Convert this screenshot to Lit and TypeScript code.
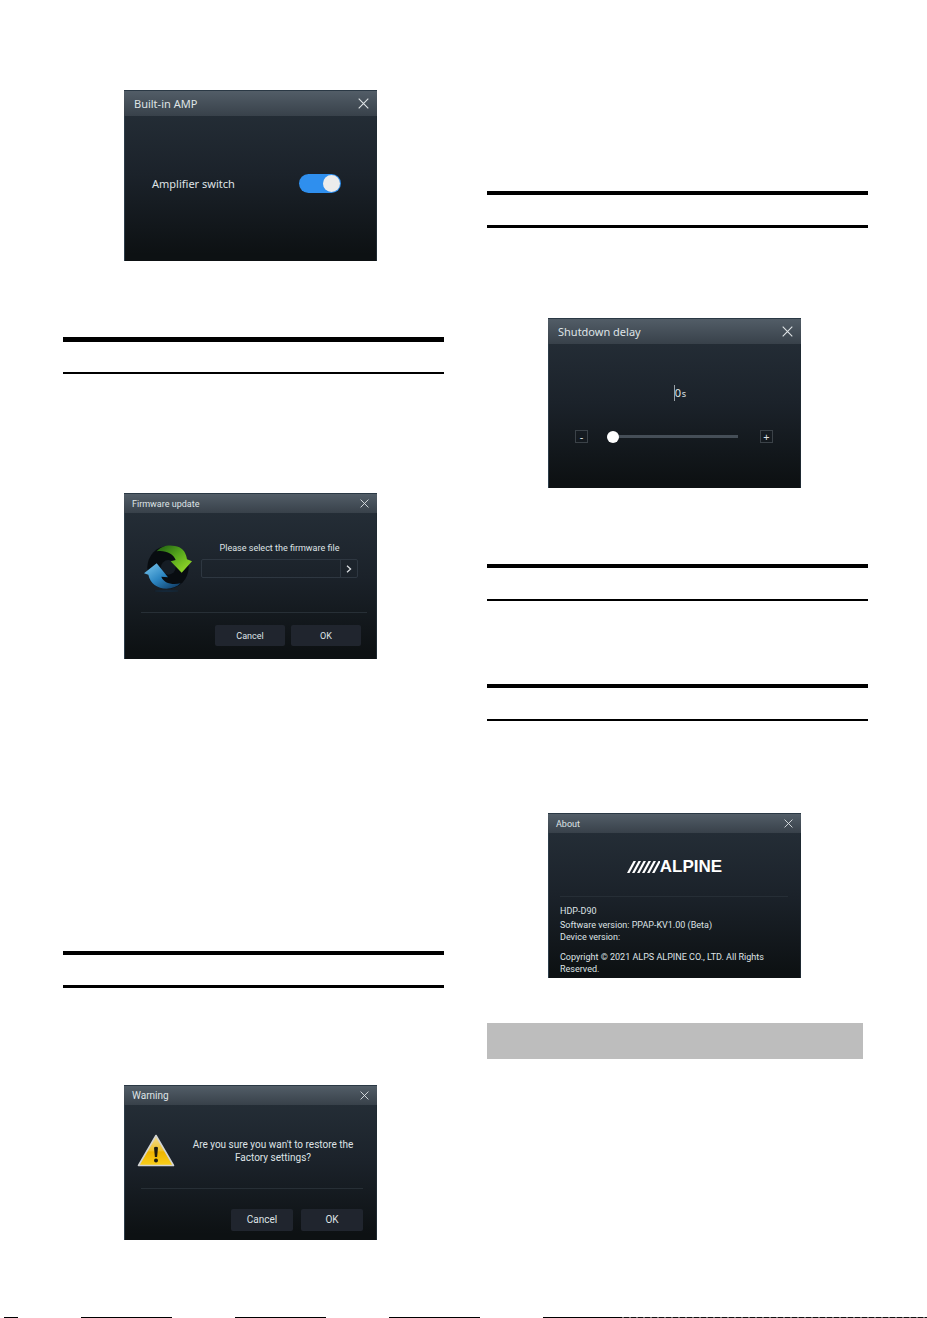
import { LitElement, html, css, svg } from "lit";
import { customElement, property } from "lit/decorators.js";

@customElement("manual-dialog")
class ManualDialog extends LitElement {
  @property() heading = "";
  @property({ reflect: true }) size: "small" | "medium" | "large" = "small";

  static styles = css`
    :host {
      display: block;
      margin: 0 67px 0 61px;
      font-family: Roboto, "Noto Sans", sans-serif;
      font-size: 9px;
      line-height: 12px;
      color: #dfe3e6;
      background: linear-gradient(#242d36 12%, #1b222a 50%, #0d1113 96%);
      box-shadow: inset 1px 0 #2c3c49, inset -1px 0 #1e2931;
    }
    .bar {
      box-sizing: border-box;
      display: flex;
      align-items: center;
      justify-content: space-between;
      height: 20px;
      padding: 0 8px;
      background: linear-gradient(#525d67, #38414a);
      border-top: 1px solid #2a3844;
    }
    .title {
      margin: 0;
      font-size: inherit;
      font-weight: 400;
    }
    .close {
      display: flex;
      padding: 0;
      border: 0;
      background: none;
      color: #dfe3e6;
    }
    .close svg {
      width: 9px;
      height: 9px;
    }
    :host([size="medium"]) {
      font-size: 10px;
    }
    :host([size="large"]) {
      font-family: "Noto Sans", "Open Sans", sans-serif;
      font-size: 11px;
      line-height: 16px;
    }
    :host([size="large"]) .bar {
      height: 26px;
      padding: 0 8px 0 10px;
    }
    :host([size="large"]) .close svg {
      width: 11px;
      height: 11px;
    }
  `;

  render() {
    return html`
      <header class="bar">
        <h2 class="title">${this.heading}</h2>
        <button class="close" aria-label="Close">
          <svg viewBox="0 0 11 11" fill="none" stroke="currentColor" stroke-width="1.1">
            <path d="M.7.7l9.6 9.6M10.3.7L.7 10.3" />
          </svg>
        </button>
      </header>
      <slot></slot>
    `;
  }
}

const refreshIcon = html`
  <svg class="refresh" viewBox="24 18 144 144" aria-hidden="true">
    <defs>
      <linearGradient id="green" x1="0" y1="0" x2="1" y2="1">
        <stop offset="0" stop-color="#1d5a12" />
        <stop offset=".45" stop-color="#55a51c" />
        <stop offset="1" stop-color="#a4e62c" />
      </linearGradient>
      <linearGradient id="blue" x1="0" y1="0" x2="1" y2="1">
        <stop offset="0" stop-color="#7cc8ee" />
        <stop offset=".5" stop-color="#2c86c2" />
        <stop offset="1" stop-color="#0c3157" />
      </linearGradient>
    </defs>
    <ellipse cx="96" cy="88" rx="62" ry="64" fill="#080c10" />
    <circle cx="97" cy="88" r="22" fill="#151c24" />
    <path fill="url(#green)" d="M62 40C78 20 108 18 130 28C143 35 150 46 153 64L168 70L137 104L104 70L119 66C112 48 90 36 62 40Z" />
    <path fill="url(#blue)" d="M62 76L24 106L37 110C42 136 64 152 92 152C108 152 122 147 134 136C106 142 82 134 76 116L96 118Z" />
    <ellipse cx="92" cy="159" rx="36" ry="3" fill="#123049" opacity=".5" />
  </svg>
`;

const warningIcon = html`
  <svg class="warning" viewBox="0 0 38 33" aria-hidden="true">
    <defs>
      <linearGradient id="amber" x1="0" y1="0" x2="0" y2="1">
        <stop offset="0" stop-color="#f3dc94" />
        <stop offset=".5" stop-color="#efc32c" />
        <stop offset=".55" stop-color="#eeb400" />
        <stop offset="1" stop-color="#f9cf1c" />
      </linearGradient>
    </defs>
    <path d="M19 1.5L36.5 31.5H1.5Z" fill="url(#amber)" stroke="#d3d4d2" stroke-width="1.6" stroke-linejoin="round" />
    <path d="M17 13.5Q19 11.8 21 13.5L20.1 23H17.9Z" fill="#1c1a10" />
    <circle cx="19" cy="26.6" r="2" fill="#1c1a10" />
  </svg>
`;

const slashes = [0, 5, 10, 15, 20, 25];

@customElement("app-root")
class AppRoot extends LitElement {
  static styles = css`
    :host {
      display: block;
      background: #fff;
    }
    *,
    *::before {
      box-sizing: border-box;
    }
    .page {
      display: flex;
      flex-direction: column;
      justify-content: space-between;
      min-height: 100vh;
    }
    .columns {
      display: grid;
      grid-template-columns: 1fr 1fr;
      gap: 43px;
      padding: 90px 59px 0 63px;
    }
    .rule {
      height: 37px;
      border-top: 4px solid #000;
      border-bottom: 2px solid #000;
    }
    .rule.heavy {
      border-bottom-width: 3px;
    }
    .rule.bold {
      border-top-width: 5px;
    }
    .left .rule.bold {
      margin: 76px 0 119px;
    }
    .left .rule.heavy {
      margin: 292px 0 97px;
    }
    .right .rule.heavy {
      margin: 101px 0 90px;
    }
    .right .rule.mid {
      margin: 76px 0 83px;
    }
    .right .rule.last {
      margin-bottom: 92px;
    }
    .band {
      height: 36px;
      margin: 45px 5px 0 0;
      background: #bdbdbd;
    }
    button,
    input {
      font: inherit;
      color: inherit;
    }
    button {
      padding: 0;
    }
    .switch-row {
      display: flex;
      align-items: center;
      justify-content: space-between;
      padding: 58px 36px 68px 28px;
    }
    .switch {
      appearance: none;
      display: flex;
      justify-content: flex-end;
      width: 42px;
      height: 19px;
      margin: 0;
      padding: 1px;
      border-radius: 10px;
      background: #2f8fee;
    }
    .switch::before {
      content: "";
      width: 17px;
      height: 17px;
      border-radius: 50%;
      background: #ececec;
    }
    .firmware {
      display: grid;
      grid-template-columns: 48px 1fr;
      gap: 9px;
      padding: 29px 19px 0 20px;
    }
    .refresh {
      width: 48px;
      height: 48px;
      margin-top: 2px;
    }
    .file {
      display: flex;
      flex-direction: column;
      gap: 5px;
    }
    .file-label {
      text-align: center;
    }
    .picker {
      display: flex;
      height: 19px;
      border: 1px solid #2e3741;
      border-radius: 2px;
    }
    .path {
      flex: 1;
      min-width: 0;
      padding: 0 4px;
      border: 0;
      background: none;
    }
    .browse {
      display: flex;
      align-items: center;
      justify-content: center;
      width: 17px;
      border: 0;
      border-left: 1px solid #2e3741;
      background: none;
    }
    .browse svg {
      width: 6px;
      height: 8px;
    }
    .actions {
      display: flex;
      justify-content: flex-end;
      margin: 20px 10px 0 17px;
      padding: 12px 6px 13px 0;
      border-top: 1px solid #272f36;
      gap: 6px;
    }
    .action {
      width: 70px;
      height: 21px;
      border: 0;
      border-radius: 2px;
      background: #20252e;
    }
    .confirm {
      display: grid;
      grid-template-columns: 38px 1fr;
      gap: 10px;
      padding: 29px 16px 0 13px;
    }
    .warning {
      width: 38px;
      height: 33px;
    }
    .question {
      margin: 4px 0 0;
      text-align: center;
      line-height: 13px;
      white-space: nowrap;
    }
    .actions.compact {
      margin: 21px 14px 0 17px;
      padding: 20px 0 9px;
      gap: 8px;
    }
    .actions.compact .action {
      width: 62px;
      height: 22px;
    }
    .delay {
      display: flex;
      justify-content: center;
      align-items: baseline;
      padding: 41px 0 0 11px;
    }
    .seconds {
      width: 8px;
      height: 16px;
      padding: 0;
      border: 0;
      border-left: 1px solid #9aa1a6;
      background: none;
      outline: none;
    }
    .unit {
      font-size: 9px;
    }
    .slider-row {
      display: flex;
      align-items: center;
      padding: 28px 28px 45px 27px;
      gap: 19px;
    }
    .step {
      display: flex;
      align-items: center;
      justify-content: center;
      width: 13px;
      height: 13px;
      border: 1px solid #3b4248;
      background: none;
    }
    .slider {
      appearance: none;
      flex: 1;
      min-width: 0;
      height: 12px;
      margin: 0 3px 0 0;
      background: linear-gradient(#454e57, #454e57) center / 100% 3px no-repeat;
    }
    .slider::-webkit-slider-thumb {
      appearance: none;
      width: 12px;
      height: 12px;
      border-radius: 50%;
      background: #fff;
    }
    .logo {
      display: flex;
      justify-content: center;
      align-items: center;
      height: 18px;
      margin: 25px 0 20px;
      font-family: "Liberation Sans", sans-serif;
      font-size: 17px;
      font-weight: 700;
      line-height: 18px;
      color: #fff;
    }
    .logo svg {
      width: 33px;
      height: 12px;
    }
    .about {
      margin: 0 13px 0 12px;
      padding: 8px 0 3px;
      border-top: 1px solid #262e36;
    }
    .about p {
      margin: 0;
    }
    .about .model {
      margin-bottom: 2px;
    }
    .about .legal {
      margin-top: 8px;
    }
    .edge {
      display: flex;
      height: 1px;
      padding-left: 4px;
    }
    .dash {
      flex: 0 1 91px;
      margin-right: 63px;
      background: #000;
    }
    .dash.short {
      flex-basis: 14px;
    }
    .dash.end {
      flex-basis: 79px;
      margin-right: 0;
    }
    .dots {
      flex: 1;
      background: repeating-linear-gradient(90deg, #777 0 2px, #111 2px 7px);
    }
  `;

  render() {
    return html`
      <div class="page">
        <main class="columns">
          <div class="left">
            <manual-dialog size="large" heading="Built-in AMP">
              <div class="switch-row">
                <label for="amp">Amplifier switch</label>
                <input id="amp" class="switch" type="checkbox" role="switch" checked />
              </div>
            </manual-dialog>
            <div class="rule bold"></div>
            <manual-dialog heading="Firmware update">
              <div class="firmware">
                ${refreshIcon}
                <div class="file">
                  <label class="file-label" for="path">Please select the firmware file</label>
                  <div class="picker">
                    <input id="path" class="path" type="text" />
                    <button class="browse" aria-label="Browse">
                      <svg viewBox="0 0 6 8" fill="none" stroke="currentColor" stroke-width="1.2"><path d="M1 .8L4.6 4L1 7.2" /></svg>
                    </button>
                  </div>
                </div>
              </div>
              <div class="actions">
                <button class="action">Cancel</button>
                <button class="action">OK</button>
              </div>
            </manual-dialog>
            <div class="rule heavy"></div>
            <manual-dialog size="medium" heading="Warning">
              <div class="confirm">
                ${warningIcon}
                <p class="question">Are you sure you wan't to restore the<br />Factory settings?</p>
              </div>
              <div class="actions compact">
                <button class="action">Cancel</button>
                <button class="action">OK</button>
              </div>
            </manual-dialog>
          </div>
          <div class="right">
            <div class="rule heavy"></div>
            <manual-dialog size="large" heading="Shutdown delay">
              <div class="delay">
                <input id="seconds" class="seconds" type="text" value="0" aria-label="Shutdown delay" />
                <label class="unit" for="seconds">s</label>
              </div>
              <div class="slider-row">
                <button class="step">-</button>
                <input class="slider" type="range" min="0" max="60" value="0" aria-label="Delay" />
                <button class="step">+</button>
              </div>
            </manual-dialog>
            <div class="rule mid"></div>
            <div class="rule last"></div>
            <manual-dialog heading="About">
              <div class="logo">
                <svg viewBox="0 0 33 12" aria-hidden="true">
                  ${slashes.map((x) => svg`<path fill="#fff" d="M${x} 12L${x + 6.5} 0H${x + 9}L${x + 2.5} 12Z" />`)}
                </svg>
                <span>ALPINE</span>
              </div>
              <div class="about">
                <p class="model">HDP-D90</p>
                <p>Software version: PPAP-KV1.00 (Beta)</p>
                <p>Device version:</p>
                <p class="legal">Copyright © 2021 ALPS ALPINE CO., LTD. All Rights Reserved.</p>
              </div>
            </manual-dialog>
            <div class="band"></div>
          </div>
        </main>
        <div class="edge">
          <span class="dash short"></span>
          <span class="dash"></span>
          <span class="dash"></span>
          <span class="dash"></span>
          <span class="dash end"></span>
          <span class="dots"></span>
        </div>
      </div>
    `;
  }
}
